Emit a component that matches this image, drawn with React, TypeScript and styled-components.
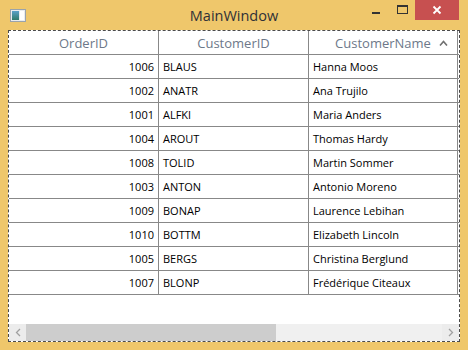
import React from 'react';
import styled, { createGlobalStyle } from 'styled-components';

const GlobalStyle = createGlobalStyle`
  html, body {
    margin: 0;
    padding: 0;
    background: #ffffff;
  }
  body {
    font-family: "Open Sans", "Noto Sans", sans-serif;
  }
`;

const orders = [
  { id: 1006, customer: 'BLAUS', name: 'Hanna Moos' },
  { id: 1002, customer: 'ANATR', name: 'Ana Trujilo' },
  { id: 1001, customer: 'ALFKI', name: 'Maria Anders' },
  { id: 1004, customer: 'AROUT', name: 'Thomas Hardy' },
  { id: 1008, customer: 'TOLID', name: 'Martin Sommer' },
  { id: 1003, customer: 'ANTON', name: 'Antonio Moreno' },
  { id: 1009, customer: 'BONAP', name: 'Laurence Lebihan' },
  { id: 1010, customer: 'BOTTM', name: 'Elizabeth Lincoln' },
  { id: 1005, customer: 'BERGS', name: 'Christina Berglund' },
  { id: 1007, customer: 'BLONP', name: 'Frédérique Citeaux' },
];

const Window = styled.div`
  width: 468px;
  height: 350px;
  box-sizing: border-box;
  background: #efc76b;
  display: flex;
  flex-direction: column;
`;

const TitleBar = styled.div`
  height: 30px;
  display: grid;
  grid-template-columns: 1fr auto 1fr;
  align-items: start;
  flex-shrink: 0;
`;

const AppIcon = styled.div`
  width: 16px;
  height: 13px;
  margin: 9px 0 0 10px;
  display: flex;
`;

const Title = styled.div`
  font-size: 14.5px;
  line-height: 32px;
  color: #2f3137;
`;

const Controls = styled.div`
  display: flex;
  justify-content: flex-end;
  align-items: flex-start;
  margin-right: 9px;
`;

const CaptionButton = styled.div<{ $close?: boolean }>`
  width: ${p => (p.$close ? 44 : 26)}px;
  height: 20px;
  display: flex;
  align-items: center;
  justify-content: center;
  background: ${p => (p.$close ? '#c75050' : 'transparent')};
`;

const Client = styled.div`
  flex: 1;
  margin: 0 8px 8px 8px;
  display: flex;
`;

const Grid = styled.div`
  flex: 1;
  border: 1px dashed #4a4a4a;
  background: #ffffff;
  display: flex;
  flex-direction: column;
  overflow: hidden;
`;

const Rows = styled.div`
  flex: 1;
  display: flex;
  flex-direction: column;
`;

const Row = styled.div`
  display: grid;
  grid-template-columns: 150px 150px 149px;
  height: 24px;
  border-bottom: 1px solid #888888;
  box-sizing: border-box;
  flex-shrink: 0;
`;

const HeaderCell = styled.div`
  position: relative;
  border-right: 1px solid #888888;
  display: flex;
  align-items: center;
  justify-content: center;
  font-size: 13px;
  color: #6d7889;
  padding-top: 1px;
`;

const SortArrow = styled.svg`
  position: absolute;
  right: 9px;
  top: 9px;
`;

const Cell = styled.div<{ $right?: boolean }>`
  border-right: 1px solid #888888;
  display: flex;
  align-items: center;
  justify-content: ${p => (p.$right ? 'flex-end' : 'flex-start')};
  padding: 0 4px;
  font-size: 11px;
  color: #000000;
  white-space: nowrap;
  overflow: hidden;
`;

const ScrollBar = styled.div`
  height: 17px;
  display: flex;
  background: #f0f0f0;
  flex-shrink: 0;
`;

const ScrollButton = styled.div`
  width: 17px;
  display: flex;
  align-items: center;
  justify-content: center;
  background: #ececec;
`;

const Track = styled.div`
  flex: 1;
  display: flex;
`;

const Thumb = styled.div`
  width: 250px;
  background: #cdcdcd;
`;

export default function App() {
  return (
    <>
      <GlobalStyle />
      <Window>
        <TitleBar>
          <AppIcon>
            <svg width="16" height="13" viewBox="0 0 16 13">
              <defs>
                <linearGradient id="ig" x1="0" y1="0" x2="0" y2="1">
                  <stop offset="0" stopColor="#5aa0c8" />
                  <stop offset="1" stopColor="#2f7a6a" />
                </linearGradient>
              </defs>
              <rect x="0.5" y="0.5" width="15" height="12" fill="#e9ecef" stroke="#9aa3ab" />
              <rect x="2" y="2" width="7" height="9" fill="url(#ig)" />
              <rect x="10" y="2" width="4" height="9" fill="#ffffff" />
            </svg>
          </AppIcon>
          <Title>MainWindow</Title>
          <Controls>
            <CaptionButton>
              <svg width="10" height="10" viewBox="0 0 10 10">
                <rect x="1" y="7" width="8" height="2" fill="#333" />
              </svg>
            </CaptionButton>
            <CaptionButton>
              <svg width="11" height="10" viewBox="0 0 11 10">
                <rect x="0.5" y="0.5" width="10" height="8" fill="none" stroke="#333" />
                <rect x="0" y="0" width="11" height="2" fill="#333" />
              </svg>
            </CaptionButton>
            <CaptionButton $close>
              <svg width="10" height="10" viewBox="0 0 10 10">
                <path d="M1.5 1.5 L8.5 8.5 M8.5 1.5 L1.5 8.5" stroke="#ffffff" strokeWidth="1.8" />
              </svg>
            </CaptionButton>
          </Controls>
        </TitleBar>
        <Client>
          <Grid>
            <Rows>
              <Row>
                <HeaderCell>OrderID</HeaderCell>
                <HeaderCell>CustomerID</HeaderCell>
                <HeaderCell>
                  CustomerName
                  <SortArrow width="9" height="6" viewBox="0 0 9 6">
                    <path d="M1 5.5 L4.5 1.5 L8 5.5" fill="none" stroke="#707070" strokeWidth="1.6" />
                  </SortArrow>
                </HeaderCell>
              </Row>
              {orders.map(o => (
                <Row key={o.id}>
                  <Cell $right>{o.id}</Cell>
                  <Cell>{o.customer}</Cell>
                  <Cell>{o.name}</Cell>
                </Row>
              ))}
            </Rows>
            <ScrollBar>
              <ScrollButton>
                <svg width="6" height="9" viewBox="0 0 6 9">
                  <path d="M5 1 L1.5 4.5 L5 8" fill="none" stroke="#a0a0a0" strokeWidth="1.3" />
                </svg>
              </ScrollButton>
              <Track>
                <Thumb />
              </Track>
              <ScrollButton>
                <svg width="6" height="9" viewBox="0 0 6 9">
                  <path d="M1 1 L4.5 4.5 L1 8" fill="none" stroke="#a0a0a0" strokeWidth="1.3" />
                </svg>
              </ScrollButton>
            </ScrollBar>
          </Grid>
        </Client>
      </Window>
    </>
  );
}
